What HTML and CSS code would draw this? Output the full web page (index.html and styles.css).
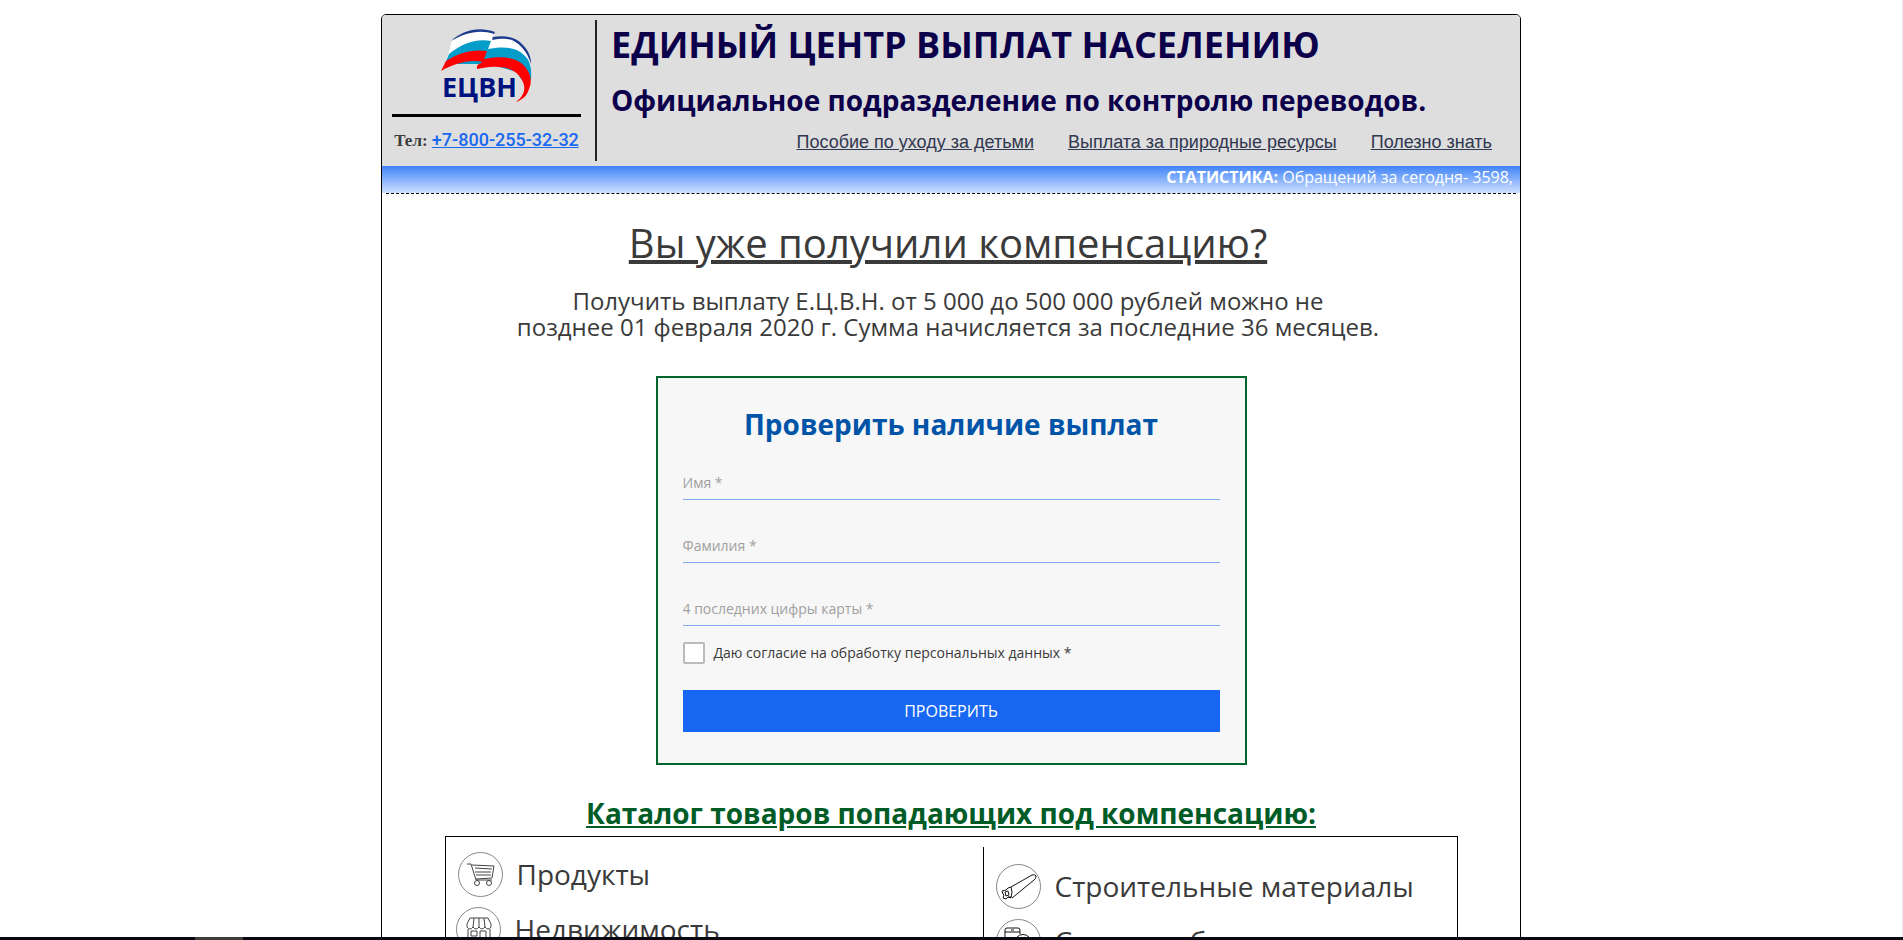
FILE: index.html
```html
<!DOCTYPE html>
<html lang="ru">
<head>
<meta charset="utf-8">
<title>Единый центр выплат населению</title>
<link rel="stylesheet" href="styles.css">
</head>
<body>
<div class="page">
  <header class="header">
    <div class="brand">
      <svg class="logo" viewBox="0 0 115 90" role="img" aria-label="ЕЦВН">
        <path fill="#fff" d="M23 20C34 12 49 8 65 12L63 18C73 16 83 17 91 23C98 29 102 37 102 48L60 42L17 42Z"/>
        <path fill="#1d3a8f" d="M22 21C34 10 50 6 66 12L65 14C50 9 36 13 22 21ZM64 17C76 15 86 17 93 24C99 30 102 36 102 44C98 31 91 24 83 20C76 18 70 19 63 20Z"/>
        <path fill="#049cc8" d="M20 34C32 24 47 18 62 21L59 29C74 26 87 27 95 35C101 40 103 48 102 59C99 67 92 61 88 52L60 44L16 44Z"/>
        <path fill="#f00" d="M17 41C30 33 43 29 58 31L55 39C71 36 84 37 92 43C101 50 104 60 100 69C98 76 93 80 87 82C95 76 97 69 94 62C90 53 82 47 69 47C62 46 55 48 48 49C47 45 50 44 54 42C40 39 25 44 12 51Z"/>
        <text class="logo-text" x="13" y="77">ЕЦВН</text>
      </svg>
      <p class="phone">Тел: <a href="tel:+78002553232">+7-800-255-32-32</a></p>
    </div>
    <div class="masthead">
      <h1 class="site-title">ЕДИНЫЙ ЦЕНТР ВЫПЛАТ НАСЕЛЕНИЮ</h1>
      <p class="site-subtitle">Официальное подразделение по контролю переводов.</p>
      <nav class="nav">
        <a href="#children">Пособие по уходу за детьми</a>
        <a href="#resources">Выплата за природные ресурсы</a>
        <a href="#info">Полезно знать</a>
      </nav>
    </div>
  </header>
  <div class="stats"><b>СТАТИСТИКА:</b> Обращений за сегодня- 3598,</div>
  <main class="content">
    <div class="intro">
      <h2 class="question">Вы уже получили компенсацию?</h2>
      <p class="lead">Получить выплату Е.Ц.В.Н. от 5 000 до 500 000 рублей можно не<br>позднее 01 февраля 2020 г. Сумма начисляется за последние 36 месяцев.</p>
    </div>
    <form class="check-form">
      <h3 class="form-title">Проверить наличие выплат</h3>
      <input class="field" type="text" aria-label="Имя" placeholder="Имя *">
      <input class="field" type="text" aria-label="Фамилия" placeholder="Фамилия *">
      <input class="field" type="text" aria-label="4 последних цифры карты" placeholder="4 последних цифры карты *">
      <label class="consent"><input type="checkbox">Даю согласие на обработку персональных данных *</label>
      <button class="submit" type="submit">ПРОВЕРИТЬ</button>
    </form>
    <h2 class="catalog-title">Каталог товаров попадающих под компенсацию:</h2>
    <div class="catalog">
      <ul class="column">
        <li class="item">
          <svg class="icon" viewBox="0 0 45 45"><circle cx="22.500" cy="22.500" r="22"/><path d="M9 12h4l5 16h16M14 13l22 1-2 12-16 1M17 16l17 1M17 20l16 0M18 23l15 0"/><circle cx="19" cy="31" r="2.500"/><circle cx="31" cy="31" r="2.500"/></svg>
          Продукты
        </li>
        <li class="item shifted">
          <svg class="icon" viewBox="0 0 45 45"><circle cx="22.500" cy="22.500" r="22"/><path d="M14 11h18l3 6v3q-3 4-6 0q-3 4-6 0q-3 4-6 0q-3 4-6 0v-3zM18 11l-1 9M23 11v9M28 11l1 9M12 22v15h22V22M15 24h6v5h-6zM24 37V24h6v13"/></svg>
          Недвижимость
        </li>
      </ul>
      <ul class="column column-right">
        <li class="item">
          <svg class="icon" viewBox="0 0 45 45"><circle cx="22.500" cy="22.500" r="22"/><path class="bold" d="M15 23L36 11q3-1 4 1q0 3-2 4L16 34M15 23l1 5-1 6M15 23l-3 1-2 2-4 1 1 3 1 1-1 3 3 1 2-2 3 0M15 34l-3-1M9 28l3-1 1 4-3 1z"/></svg>
          Строительные материалы
        </li>
        <li class="item">
          <svg class="icon" viewBox="0 0 45 45"><circle cx="22.500" cy="22.500" r="22"/><path class="bold" d="M20 33H11q-2 0-2-2V11q0-2 2-2h11q2 0 2 2v4M9 13h15M15 11h3"/><circle class="bold" cx="27" cy="24" r="8.500"/></svg>
          Сетевое оборудование
        </li>
      </ul>
    </div>
  </main>
</div>
<div class="bottom-bar"><span class="bottom-tab"></span></div>
</body>
</html>
```
FILE: styles.css
```css
* { box-sizing: border-box; }
html { height: 100%; }
body {
  height: 100%;
  margin: 0;
  overflow: hidden;
  border-right: 1px solid #ececf0;
  background: #fff;
  color: #3a3a3a;
  font-family: "Open Sans", "Noto Sans", sans-serif;
}
h1, h2, h3, p, ul { margin: 0; padding: 0; }
.page {
  max-width: 1140px;
  margin: 14px auto 0;
  border: 1px solid #000;
  border-radius: 5px 5px 0 0;
}
.header {
  display: flex;
  height: 151px;
  padding-top: 5px;
  background: #dedede;
  border-radius: 4px 4px 0 0;
}
.brand {
  width: 215px;
  height: 141px;
  padding: 0 14px 0 10px;
  border-right: 2px solid #222;
}
.logo {
  display: block;
  width: 115px;
  height: 90px;
  margin-left: 37px;
}
.logo-text { font-size: 27px; font-weight: 700; fill: #00127f; }
.phone {
  margin-top: 4px;
  padding-top: 11px;
  border-top: 3px solid #000;
  font: bold 17px/24px "Liberation Serif", serif;
  text-align: center;
  white-space: nowrap;
}
.phone a { color: #1968f0; font: 500 18px/24px Roboto, sans-serif; }
.masthead { flex: 1; padding: 0 28px 0 14px; color: #0c004b; }
.site-title { font-size: 36px; line-height: 50px; font-weight: 700; }
.site-subtitle { margin-top: 11px; font-size: 28px; line-height: 38px; font-weight: 700; }
.nav {
  display: flex;
  justify-content: flex-end;
  gap: 34px;
  margin-top: 13px;
  font: 18px/20px "Liberation Sans", sans-serif;
}
.nav a { color: #303750; }
.stats {
  height: 27px;
  padding-right: 7px;
  background: linear-gradient(#3f83f8, #cfe0fe);
  color: #fff;
  font-size: 16px;
  line-height: 22px;
  text-align: right;
}
.content {
  display: flex;
  flex-direction: column;
  align-items: center;
  margin: 0 4px;
  border-top: 1px dashed #000;
}
.intro { padding: 21px 6px 0 0; text-align: center; }
.question {
  font-size: 40px;
  line-height: 56px;
  font-weight: 400;
  text-decoration: underline;
}
.lead { margin-top: 17px; font-size: 24px; line-height: 26px; }
.check-form {
  display: flex;
  flex-direction: column;
  width: 591px;
  max-width: 100%;
  height: 389px;
  margin-top: 36px;
  padding: 26px 25px;
  border: 2px solid #00642d;
  background: #f7f7f7;
}
.form-title { font-size: 28px; line-height: 40px; font-weight: 700; text-align: center; color: #0054a8; }
.field {
  height: 34px;
  margin-top: 29px;
  padding: 0;
  border: 0;
  border-bottom: 1px solid #80acf5;
  background: none;
  font: 400 14px/20px "Open Sans", sans-serif;
}
.form-title + .field { margin-top: 22px; }
.field::placeholder { color: #a0a0a0; }
.consent { display: flex; align-items: center; gap: 9px; margin-top: 16px; font-size: 14px; line-height: 22px; }
.consent input {
  appearance: none;
  width: 22px;
  height: 22px;
  margin: 0;
  border: 2px solid #bbb;
  border-radius: 2px;
  background: #fff;
}
.submit {
  height: 42px;
  margin-top: 26px;
  border: 0;
  background: #1767f2;
  color: #fff;
  font: 16px/22px "Open Sans", sans-serif;
}
.catalog-title {
  margin-top: 28px;
  font-size: 28px;
  line-height: 40px;
  font-weight: 700;
  color: #005c27;
  text-decoration: underline;
}
.catalog {
  display: flex;
  width: 1013px;
  max-width: 100%;
  margin-top: 3px;
  padding: 10px 0 10px 10px;
  border: 1px solid #000;
}
.column { flex: 1; padding: 5px 2px; list-style: none; }
.column-right { flex: 0 0 474px; padding: 17px 12px; border-left: 1px solid #000; }
.item { display: flex; align-items: center; gap: 14px; margin-bottom: 10px; font-size: 28px; line-height: 45px; white-space: nowrap; }
.shifted { margin-left: -2px; }
.icon { width: 45px; height: 45px; fill: none; stroke: #444; stroke-width: 1; }
.icon > circle:first-child { stroke: #888; }
.icon .bold { stroke: #111; }
.bottom-bar { position: fixed; right: 0; bottom: 0; left: 0; height: 3px; padding-left: 195px; background: #080812; }
.bottom-tab { display: block; width: 48px; height: 3px; background: #403c3c; }
```
